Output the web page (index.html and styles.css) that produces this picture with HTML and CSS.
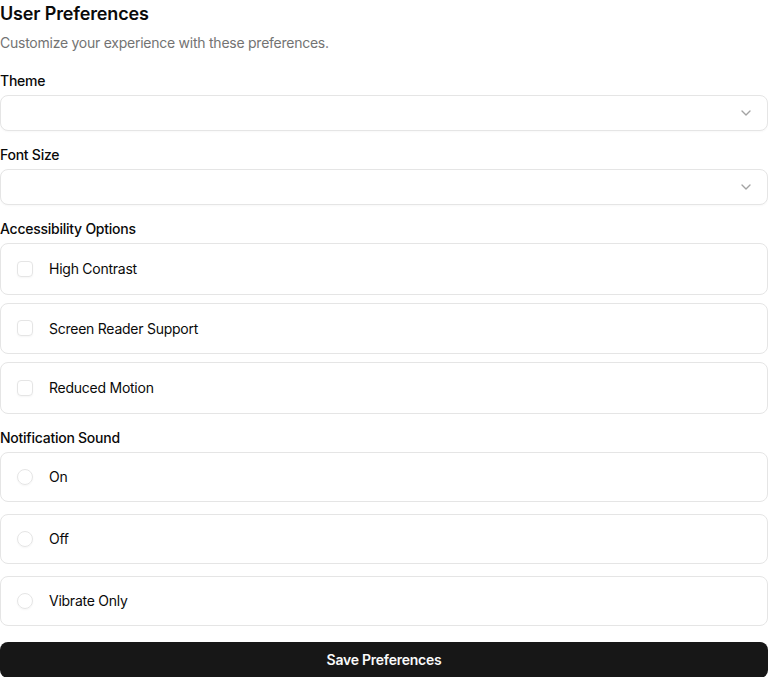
FILE: index.html
```html
<!DOCTYPE html>
<html lang="en">
<head>
<meta charset="utf-8">
<title>User Preferences</title>
<link rel="stylesheet" href="styles.css">
</head>
<body>
<main class="prefs">
  <header class="head">
    <h1 class="title">User Preferences</h1>
    <p class="subtitle">Customize your experience with these preferences.</p>
  </header>

  <section class="field">
    <div class="label">Theme</div>
    <button class="select" type="button">
      <span class="select-value"></span>
      <svg class="chev" width="16" height="16" viewBox="0 0 24 24" fill="none" stroke="currentColor" stroke-width="2" stroke-linecap="round" stroke-linejoin="round"><path d="m6 9 6 6 6-6"/></svg>
    </button>
  </section>

  <section class="field">
    <div class="label">Font Size</div>
    <button class="select" type="button">
      <span class="select-value"></span>
      <svg class="chev" width="16" height="16" viewBox="0 0 24 24" fill="none" stroke="currentColor" stroke-width="2" stroke-linecap="round" stroke-linejoin="round"><path d="m6 9 6 6 6-6"/></svg>
    </button>
  </section>

  <section class="field">
    <div class="label">Accessibility Options</div>
    <div class="list list-check">
      <label class="option option-check"><span class="box"></span><span class="opt-text">High Contrast</span></label>
      <label class="option option-check"><span class="box"></span><span class="opt-text">Screen Reader Support</span></label>
      <label class="option option-check"><span class="box"></span><span class="opt-text">Reduced Motion</span></label>
    </div>
  </section>

  <section class="field">
    <div class="label">Notification Sound</div>
    <div class="list list-radio">
      <label class="option option-radio"><span class="circle"></span><span class="opt-text">On</span></label>
      <label class="option option-radio"><span class="circle"></span><span class="opt-text">Off</span></label>
      <label class="option option-radio"><span class="circle"></span><span class="opt-text">Vibrate Only</span></label>
    </div>
  </section>

  <button class="save" type="button">Save Preferences</button>
</main>
</body>
</html>
```
FILE: styles.css
```css
* { box-sizing: border-box; }
html, body { margin: 0; padding: 0; background: #ffffff; }
body {
  font-family: Inter, "Noto Sans", "Liberation Sans", sans-serif;
  color: #0a0a0a;
  font-size: 14px;
  letter-spacing: -0.25px;
}
.prefs {
  display: flex;
  flex-direction: column;
  gap: 15px;
  width: 768px;
}
.head { display: flex; flex-direction: column; margin-bottom: 4px; }
.title {
  margin: 0;
  font-size: 18px;
  line-height: 28px;
  font-weight: 600;
  letter-spacing: -0.15px;
}
.subtitle {
  margin: 5px 0 0;
  font-size: 14px;
  line-height: 20px;
  color: #737373;
}
.field { display: flex; flex-direction: column; }
.label {
  font-size: 14px;
  line-height: 17px;
  font-weight: 500;
  margin-bottom: 6px;
}
.select {
  display: flex;
  align-items: center;
  justify-content: space-between;
  width: 100%;
  height: 36px;
  padding: 0 13px 0 12px;
  border: 1px solid #e5e5e5;
  border-radius: 8px;
  background: #fff;
  font: inherit;
  box-shadow: 0 1px 2px rgba(0,0,0,0.03);
}
.chev { color: #a3a3a3; }
.list { display: flex; flex-direction: column; }
.list-check { gap: 8px; }
.list-radio { gap: 12px; }
.option {
  display: flex;
  align-items: center;
  gap: 16px;
  padding: 16px;
  border: 1px solid #e5e5e5;
  border-radius: 8px;
  font-size: 14px;
}
.option-check { line-height: 17.5px; }
.option-radio { line-height: 16px; }
.box {
  width: 16px;
  height: 16px;
  border: 1px solid #e5e5e5;
  border-radius: 4px;
  flex: none;
  box-shadow: 0 1px 2px rgba(0,0,0,0.04);
}
.circle {
  width: 16px;
  height: 16px;
  border: 1px solid #e5e5e5;
  border-radius: 50%;
  flex: none;
  box-shadow: 0 1px 2px rgba(0,0,0,0.04);
}
.opt-text { color: #0a0a0a; }
.save {
  margin-top: 1px;
  height: 36px;
  width: 100%;
  border: none;
  border-radius: 8px;
  background: #171717;
  color: #fafafa;
  font: inherit;
  font-size: 14px;
  font-weight: 600;
  letter-spacing: -0.25px;
}
```
